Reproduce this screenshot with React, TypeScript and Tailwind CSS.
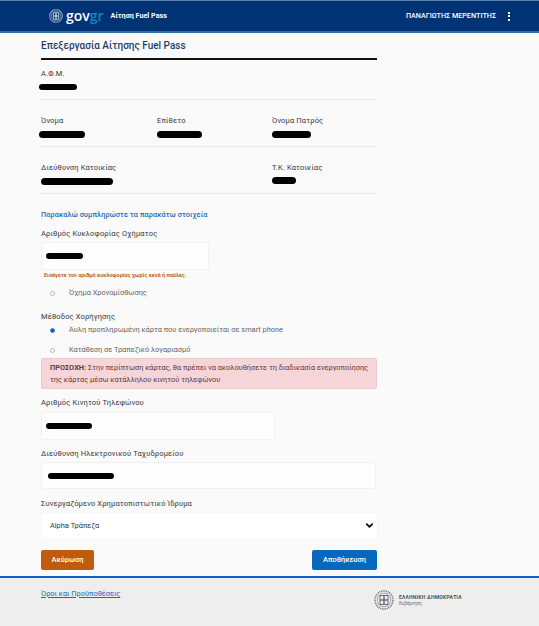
import React from "react";
import { ChevronDown } from "lucide-react";

function Redact({ w, className = "" }: { w: number; className?: string }) {
  return <div className={`h-[6px] rounded-full bg-black blur-[0.4px] ${className}`} style={{ width: w }} />;
}

function Emblem({ size, color }: { size: number; color: string }) {
  return (
    <svg width={size} height={size} viewBox="0 0 40 40" fill="none" stroke={color}>
      <circle cx="20" cy="20" r="18" strokeWidth="3" strokeDasharray="2 1.4" />
      <circle cx="20" cy="20" r="13.5" strokeWidth="1.2" />
      <rect x="12" y="11" width="16" height="18" strokeWidth="2" />
      <path d="M20 11v18M12 20h16" strokeWidth="3" />
    </svg>
  );
}

function Radio({ checked, label }: { checked?: boolean; label: string }) {
  return (
    <div className="flex h-[20px] items-center pl-[9px]">
      <span className={`flex h-[5px] w-[5px] rounded-full border ${checked ? "border-[#3f7fd0] bg-[#0a5fc0]" : "border-[#b5b5b5] bg-white"}`} />
      <span className="ml-[14px] text-[7.4px] text-[#666666]">{label}</span>
    </div>
  );
}

function Label({ children, className = "" }: { children: React.ReactNode; className?: string }) {
  return <div className={`text-[7.5px] leading-[10px] tracking-[0.15px] text-[#33383d] ${className}`}>{children}</div>;
}

function Input({ w, bar, barClass = "" }: { w: string; bar: number; barClass?: string }) {
  return (
    <div className={`flex items-center rounded-[3px] border border-[#f1f1f1] bg-[#fdfdfd] pl-[4px] ${w}`}>
      <Redact w={bar} className={barClass} />
    </div>
  );
}

export default function App() {
  return (
    <div className="flex h-[626px] w-[539px] flex-col overflow-hidden bg-[#fafafa] font-['Roboto',sans-serif]">
      <header className="flex h-[33px] shrink-0 items-center border-t border-b-2 border-t-[#5c7fa8] border-b-[#2f6ea5] bg-[#003375] pl-[49px] pr-[29px] text-white">
        <Emblem size={14} color="#e6edf5" />
        <span className="ml-[3px] font-['Open_Sans',sans-serif] text-[14px] font-semibold leading-none">
          gov<span className="text-[#0c8ac4]">gr</span>
        </span>
        <span className="ml-[7px] text-[7.2px] font-bold">Αίτηση Fuel Pass</span>
        <span className="ml-auto text-[7.2px] font-medium">ΠΑΝΑΓΙΩΤΗΣ ΜΕΡΕΝΤΙΤΗΣ</span>
        <span className="ml-[12px] flex flex-col gap-[1.5px]">
          <i className="h-[2px] w-[2px] bg-white" />
          <i className="h-[2px] w-[2px] bg-white" />
          <i className="h-[2px] w-[2px] bg-white" />
        </span>
      </header>

      <main className="ml-[41px] w-[336px] shrink-0">
        <h1 className="mt-[6px] text-[10px] font-medium leading-[13px] text-[#1f3d6b]">Επεξεργασία Αίτησης Fuel Pass</h1>
        <div className="mt-[6px] h-[2px] bg-[#111111]" />

        <Label className="mt-[9px]">Α.Φ.Μ.</Label>
        <Redact w={38} className="ml-[-2px] mt-[5px]" />
        <div className="mt-[9px] h-px bg-[#e8e8e8]" />

        <div className="mt-[16px] grid grid-cols-[116px_115px_1fr]">
          <div>
            <Label>Όνομα</Label>
            <Redact w={46} className="ml-[-2px] mt-[5px] h-[7px]" />
          </div>
          <div>
            <Label>Επίθετο</Label>
            <Redact w={45} className="mt-[5px] h-[7px]" />
          </div>
          <div>
            <Label>Όνομα Πατρός</Label>
            <Redact w={39} className="mt-[5px] h-[7px]" />
          </div>
        </div>
        <div className="mt-[8px] h-px bg-[#e8e8e8]" />

        <div className="mt-[16px] grid grid-cols-[231px_1fr]">
          <div>
            <Label>Διεύθυνση Κατοικίας</Label>
            <Redact w={72} className="mt-[5px] h-[7px]" />
          </div>
          <div>
            <Label>Τ.Κ. Κατοικίας</Label>
            <Redact w={24} className="mt-[4px] h-[7px]" />
          </div>
        </div>
        <div className="mt-[8px] h-px bg-[#e8e8e8]" />

        <div className="mt-[16px] text-[7.3px] font-medium leading-[10px] tracking-[0.1px] text-[#1d6db0]">Παρακαλώ συμπληρώστε τα παρακάτω στοιχεία</div>

        <Label className="mt-[9px]">Αριθμός Κυκλοφορίας Οχήματος</Label>
        <Input w="mt-[3px] h-[28px] w-[168px]" bar={37} />
        <div className="ml-[3px] mt-[2px] text-[5.5px] font-medium leading-[7px] text-[#b04a00]">Εισάγετε τον αριθμό κυκλοφορίας χωρίς κενά ή παύλες.</div>
        <div className="mt-[4px]">
          <Radio label="Όχημα Χρονομίσθωσης" />
        </div>

        <Label className="mt-[9px]">Μέθοδος Χορήγησης</Label>
        <div className="mt-[-2px]">
          <Radio checked label="Άυλη προπληρωμένη κάρτα που ενεργοποιείται σε smart phone" />
        </div>
        <Radio label="Κατάθεση σε Τραπεζικό λογαριασμό" />

        <div className="mt-[-2px] h-[31px] rounded-[2px] border border-[#f0c9cc] bg-[#f6d5d8] pl-[8px] pr-[2px] py-[3px] text-[7.4px] leading-[12px] text-[#5b3b3e]">
          <b className="font-bold">ΠΡΟΣΟΧΗ:</b> Στην περίπτωση κάρτας, θα πρέπει να ακολουθήσετε τη διαδικασία ενεργοποίησης
          <br />
          της κάρτας μέσω κατάλληλου κινητού τηλεφώνου
        </div>

        <Label className="mt-[9px]">Αριθμός Κινητού Τηλεφώνου</Label>
        <Input w="mt-[4px] h-[28px] w-[234px]" bar={46} />

        <Label className="mt-[9px]">Διεύθυνση Ηλεκτρονικού Ταχυδρομείου</Label>
        <Input w="mt-[3px] h-[27px] w-[335px]" bar={66} barClass="ml-[2px]" />

        <Label className="mt-[10px]">Συνεργαζόμενο Χρηματοπιστωτικό Ίδρυμα</Label>
        <div className="mt-[4px] flex h-[25px] items-center justify-between rounded-[3px] bg-white pl-[9px] pr-[2px] shadow-[0_0_1px_#e5e5e5]">
          <span className="text-[7.4px] text-[#33383d]">Alpha Τράπεζα</span>
          <ChevronDown size={11} strokeWidth={4} color="#111111" />
        </div>

        <div className="mt-[12px] flex justify-between">
          <button className="h-[20px] w-[53px] rounded-[2px] bg-[#c05a0c] text-[7.4px] font-medium text-white">Ακύρωση</button>
          <button className="h-[20px] w-[65px] rounded-[2px] bg-[#0668bd] text-[7.4px] font-medium text-white">Αποθήκευση</button>
        </div>
      </main>

      <footer className="mt-[6px] flex flex-1 items-start border-t-2 border-[#0a62c9] bg-[#eeeeee] pl-[41px]">
        <a className="mt-[11px] w-[333px] text-[7.4px] leading-[10px] text-[#1b6bb0] underline">Όροι και Προϋποθέσεις</a>
        <div className="mt-[12px] flex items-center">
          <Emblem size={20} color="#6b7078" />
          <div className="ml-[5px]">
            <div className="text-[5px] font-bold leading-[7px] tracking-[0.25px] text-[#4d5258]">ΕΛΛΗΝΙΚΗ ΔΗΜΟΚΡΑΤΙΑ</div>
            <div className="text-[4.5px] leading-[6px] text-[#6b7078]">Κυβέρνηση</div>
          </div>
        </div>
      </footer>
    </div>
  );
}
